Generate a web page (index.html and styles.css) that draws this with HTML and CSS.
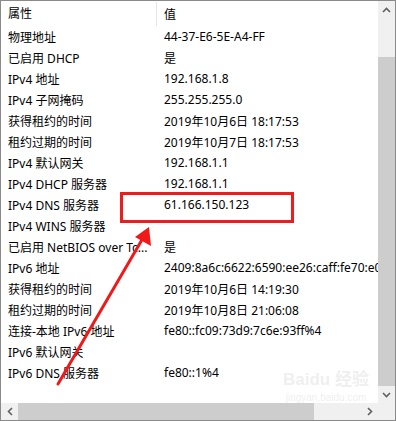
FILE: index.html
```html
<!DOCTYPE html>
<html>
<head>
	<title>网络连接详细信息</title>
	<link rel="stylesheet" href="styles.css">
</head>
<body>
	<div class="window">
		<div class="list">
			<div class="row header">
				<div class="cell name">属性</div>
				<div class="cell value">值</div>
			</div>
			<div class="row"><div class="cell name">物理地址</div><div class="cell value">44-37-E6-5E-A4-FF</div></div>
			<div class="row"><div class="cell name">已启用 DHCP</div><div class="cell value">是</div></div>
			<div class="row"><div class="cell name">IPv4 地址</div><div class="cell value">192.168.1.8</div></div>
			<div class="row"><div class="cell name">IPv4 子网掩码</div><div class="cell value">255.255.255.0</div></div>
			<div class="row"><div class="cell name">获得租约的时间</div><div class="cell value">2019年10月6日 18:17:53</div></div>
			<div class="row"><div class="cell name">租约过期的时间</div><div class="cell value">2019年10月7日 18:17:53</div></div>
			<div class="row"><div class="cell name">IPv4 默认网关</div><div class="cell value">192.168.1.1</div></div>
			<div class="row"><div class="cell name">IPv4 DHCP 服务器</div><div class="cell value">192.168.1.1</div></div>
			<div class="row"><div class="cell name">IPv4 DNS 服务器</div><div class="cell value">61.166.150.123</div></div>
			<div class="row"><div class="cell name">IPv4 WINS 服务器</div><div class="cell value"></div></div>
			<div class="row"><div class="cell name">已启用 NetBIOS over Tc...</div><div class="cell value">是</div></div>
			<div class="row"><div class="cell name">IPv6 地址</div><div class="cell value">2409:8a6c:6622:6590:ee26:caff:fe70:e0b1</div></div>
			<div class="row"><div class="cell name">获得租约的时间</div><div class="cell value">2019年10月6日 14:19:30</div></div>
			<div class="row"><div class="cell name">租约过期的时间</div><div class="cell value">2019年10月8日 21:06:08</div></div>
			<div class="row"><div class="cell name">连接-本地 IPv6 地址</div><div class="cell value">fe80::fc09:73d9:7c6e:93ff%4</div></div>
			<div class="row"><div class="cell name">IPv6 默认网关</div><div class="cell value"></div></div>
			<div class="row"><div class="cell name">IPv6 DNS 服务器</div><div class="cell value">fe80::1%4</div></div>
		</div>

		<div class="vscroll">
			<div class="arrow-btn">
				<svg width="9" height="6" viewBox="0 0 9 6"><path d="M1 5 L4.5 1.5 L8 5" fill="none" stroke="#606060" stroke-width="1.6"/></svg>
			</div>
			<div class="vtrack"><div class="vthumb"></div></div>
			<div class="arrow-btn">
				<svg width="9" height="6" viewBox="0 0 9 6"><path d="M1 1 L4.5 4.5 L8 1" fill="none" stroke="#606060" stroke-width="1.6"/></svg>
			</div>
		</div>

		<div class="hscroll">
			<div class="arrow-btn">
				<svg width="6" height="9" viewBox="0 0 6 9"><path d="M5 1 L1.5 4.5 L5 8" fill="none" stroke="#606060" stroke-width="1.6"/></svg>
			</div>
			<div class="htrack"><div class="hthumb"></div></div>
			<div class="arrow-btn">
				<svg width="6" height="9" viewBox="0 0 6 9"><path d="M1 1 L4.5 4.5 L1 8" fill="none" stroke="#606060" stroke-width="1.6"/></svg>
			</div>
		</div>

		<div class="corner"></div>

		<!-- annotation drawn over the screenshot -->
		<div class="highlight"></div>
		<svg class="arrow" width="396" height="421" viewBox="0 0 396 421">
			<line x1="58" y1="384" x2="143" y2="238" stroke="#f01818" stroke-width="3" stroke-linecap="round"/>
			<polygon points="149,227 151,246 135,237" fill="#f01818"/>
		</svg>
		<div class="watermark">
			<div class="wm-logo">Bai<span>du</span> 经验</div>
			<div class="wm-url">jingyan.baidu.com</div>
		</div>
	</div>
</body>
</html>
```

FILE: styles.css
```css
body {
	margin: 0;
	background: #fff;
	font-family: "Noto Sans", "Noto Sans CJK SC", sans-serif;
	font-size: 12px;
	color: #000;
}

.window {
	position: relative;
	width: 396px;
	height: 421px;
	box-sizing: border-box;
	border: 1px solid #8a8a8a;
	display: grid;
	grid-template-columns: 1fr 17px;
	grid-template-rows: 1fr 17px;
	overflow: hidden;
}

.list {
	overflow: hidden;
	background: #fff;
}

.row {
	display: flex;
	height: 21px;
	align-items: center;
	white-space: nowrap;
}

.row.header {
	height: 25px;
}

.cell.name {
	width: 156px;
	flex: none;
	box-sizing: border-box;
	padding-left: 7px;
	overflow: hidden;
}

.cell.value {
	padding-left: 7px;
}

.header .cell.name {
	border-right: 1px solid #e5e5e5;
	height: 24px;
	line-height: 24px;
	margin-top: 1px;
}

.highlight {
	position: absolute;
	left: 119px;
	top: 191px;
	width: 174px;
	height: 31px;
	box-sizing: border-box;
	border: 3px solid #ee1c1c;
}

.arrow {
	position: absolute;
	left: -1px;
	top: -1px;
}

.watermark {
	position: absolute;
	left: 280px;
	top: 367px;
	width: 90px;
	color: rgba(200, 200, 200, 0.3);
	font-family: "Liberation Sans", "Noto Sans CJK SC", sans-serif;
	text-align: center;
	white-space: nowrap;
}

.wm-logo {
	font-size: 17px;
	font-weight: bold;
	line-height: 24px;
}

.wm-url {
	font-size: 10px;
	line-height: 12px;
}

.vscroll {
	display: flex;
	flex-direction: column;
	background: #f0f0f0;
}

.hscroll {
	display: flex;
	background: #f0f0f0;
}

.arrow-btn {
	width: 17px;
	height: 17px;
	flex: none;
	display: flex;
	align-items: center;
	justify-content: center;
}

.vtrack {
	flex: 1;
	padding-top: 39px;
	display: flex;
	flex-direction: column;
}

.vthumb {
	flex: 1;
	background: #cdcdcd;
}

.htrack {
	flex: 1;
	display: flex;
	padding-right: 47px;
}

.hthumb {
	flex: 1;
	background: #cdcdcd;
}

.corner {
	background: #f0f0f0;
}
```
